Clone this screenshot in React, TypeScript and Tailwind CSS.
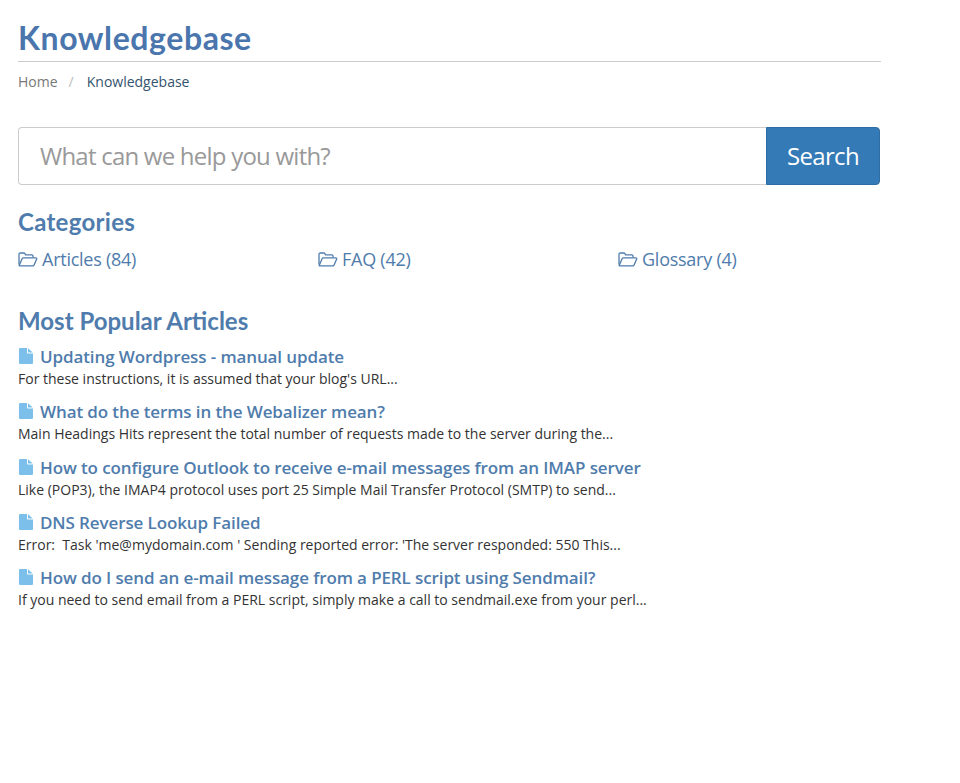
const articles = [
  {
    title: "Updating Wordpress - manual update",
    text: "For these instructions, it is assumed that your blog's URL...",
  },
  {
    title: "What do the terms in the Webalizer mean?",
    text: "Main Headings Hits represent the total number of requests made to the server during the...",
  },
  {
    title: "How to configure Outlook to receive e-mail messages from an IMAP server",
    text: "Like (POP3), the IMAP4 protocol uses port 25 Simple Mail Transfer Protocol (SMTP) to send...",
  },
  {
    title: "DNS Reverse Lookup Failed",
    text: "Error:  Task 'me@mydomain.com ' Sending reported error: 'The server responded: 550 This...",
  },
  {
    title: "How do I send an e-mail message from a PERL script using Sendmail?",
    text: "If you need to send email from a PERL script, simply make a call to sendmail.exe from your perl...",
  },
];

const categories = ["Articles (84)", "FAQ (42)", "Glossary (4)"];

function FolderIcon() {
  return (
    <svg width="20" height="15" viewBox="0 0 20 15" fill="none" stroke="#4f7cac" strokeWidth="1.3" strokeLinejoin="round" className="shrink-0">
      <path d="M1 12.5V2.2C1 1.5 1.5 1 2.2 1h3.6c.5 0 .9.2 1.1.6l.7 1.2h6.2c.7 0 1.2.5 1.2 1.2v1.6" />
      <path d="M1.2 13.6 4.2 6.6c.2-.5.6-.8 1.2-.8h12.4c.7 0 1.1.6.9 1.2l-2.6 6.1c-.2.5-.7.8-1.2.8H2c-.6 0-1-.6-.8-.9Z" />
    </svg>
  );
}

function FileIcon() {
  return (
    <svg width="14" height="16" viewBox="0 0 14 16" className="mb-[1px] ml-[1px] shrink-0">
      <path fill="#7cbfea" d="M0 1a1 1 0 0 1 1-1h7v4.5c0 .6.5 1 1 1h5V15a1 1 0 0 1-1 1H1a1 1 0 0 1-1-1Z" />
      <path fill="#7cbfea" d="M9 0.3 13.7 4.5H9Z" />
    </svg>
  );
}

export default function App() {
  return (
    <div className="min-h-[783px] bg-white pl-[18px] font-['Open_Sans',sans-serif]">
      <div className="w-[863px]">
        <h1 className="border-b border-[#cccccc] pt-[19px] pb-[5px] font-['Lato',sans-serif] text-[32px] leading-[37px] font-bold tracking-[0.58px] text-[#4a76ad]">
          Knowledgebase
        </h1>
        <div className="mt-[10px] flex text-[14px] leading-[20px]">
          <span className="text-[#777777]">Home</span>
          <span className="mr-[13px] ml-[11px] text-[#bbbbbb]">/</span>
          <span className="text-[#34536e]">Knowledgebase</span>
        </div>
      </div>

      <div className="mt-[35px] flex h-[58px] w-[862px]">
        <div className="flex flex-1 items-center rounded-l-[4px] border border-r-0 border-[#cccccc] pl-[21px] text-[24px] tracking-[-0.77px] text-[#999999]">
          What can we help you with?
        </div>
        <button type="button" className="w-[114px] rounded-r-[4px] border border-[#2e6da4] bg-[#337ab7] text-[24px] tracking-[-0.67px] text-white">
          Search
        </button>
      </div>

      <h2 className="mt-[22px] font-['Lato',sans-serif] text-[24px] leading-[30px] font-bold tracking-[0.3px] text-[#4f7cac]">
        Categories
      </h2>
      <div className="mt-[9px] grid w-[900px] grid-cols-3">
        {categories.map((c) => (
          <div key={c} className="flex items-center gap-[4px] text-[18px] leading-[26px] tracking-[-0.25px] text-[#4f7cac]">
            <FolderIcon />
            <span>{c}</span>
          </div>
        ))}
      </div>

      <h2 className="mt-[34px] font-['Lato',sans-serif] text-[24px] leading-[30px] font-bold text-[#4f7cac]">
        Most Popular Articles
      </h2>
      <div className="mt-[10px] flex flex-col gap-[13.3px]">
        {articles.map((a) => (
          <div key={a.title}>
            <div className="mb-[2px] flex items-center gap-[7px] text-[17px] leading-[21px] font-semibold tracking-[-0.11px] text-[#4f7cac]">
              <FileIcon />
              <span>{a.title}</span>
            </div>
            <p className="text-[14px] leading-[19px] whitespace-pre-wrap text-[#333333]">{a.text}</p>
          </div>
        ))}
      </div>
    </div>
  );
}
